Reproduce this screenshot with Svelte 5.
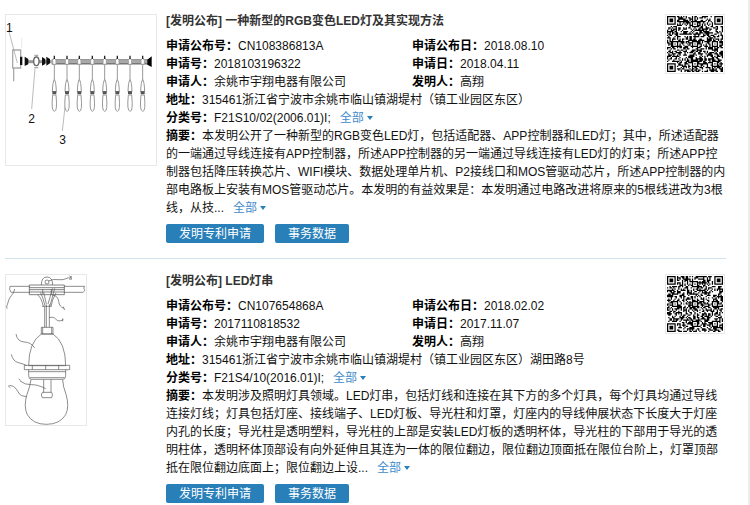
<script lang="ts">
  interface Patent {
    title: string;
    publicationNo: string;
    publicationDate: string;
    applicationNo: string;
    applicationDate: string;
    applicant: string;
    inventor: string;
    address: string;
    category: string;
    summary: string;
    drawing: "string" | "bulb";
  }

  const patents: Patent[] = [
    {
      title: "一种新型的RGB变色LED灯及其实现方法",
      publicationNo: "CN108386813A",
      publicationDate: "2018.08.10",
      applicationNo: "2018103196322",
      applicationDate: "2018.04.11",
      applicant: "余姚市宇翔电器有限公司",
      inventor: "高翔",
      address: "315461浙江省宁波市余姚市临山镇湖堤村（镇工业园区东区）",
      category: "F21S10/02(2006.01)I;",
      summary:
        "本发明公开了一种新型的RGB变色LED灯，包括适配器、APP控制器和LED灯；其中，所述适配器的一端通过导线连接有APP控制器，所述APP控制器的另一端通过导线连接有LED灯的灯束；所述APP控制器包括降压转换芯片、WIFI模块、数据处理单片机、P2接线口和MOS管驱动芯片，所述APP控制器的内部电路板上安装有MOS管驱动芯片。本发明的有益效果是：本发明通过电路改进将原来的5根线进改为3根线，从技...",
      drawing: "string",
    },
    {
      title: "LED灯串",
      publicationNo: "CN107654868A",
      publicationDate: "2018.02.02",
      applicationNo: "2017110818532",
      applicationDate: "2017.11.07",
      applicant: "余姚市宇翔电器有限公司",
      inventor: "高翔",
      address: "315461浙江省宁波市余姚市临山镇湖堤村（镇工业园区东区）湖田路8号",
      category: "F21S4/10(2016.01)I;",
      summary:
        "本发明涉及照明灯具领域。LED灯串，包括灯线和连接在其下方的多个灯具，每个灯具均通过导线连接灯线；灯具包括灯座、接线端子、LED灯板、导光柱和灯罩，灯座内的导线伸展状态下长度大于灯座内孔的长度；导光柱是透明塑料，导光柱的上部是安装LED灯板的透明杯体，导光柱的下部用于导光的透明柱体，透明杯体顶部设有向外延伸且其连为一体的限位翻边，限位翻边顶面抵在限位台阶上，灯罩顶部抵在限位翻边底面上；限位翻边上设...",
      drawing: "bulb",
    },
  ];

  const lamps = [163, 201, 238, 277, 314, 352, 390, 428];

  const QR_SIZE = 45;

  // ring pattern shared by finder and alignment marks
  function ring(dx: number, dy: number, radius: number) {
    const d = Math.max(Math.abs(dx), Math.abs(dy));
    if (d > radius) return null;
    return radius === 4 ? d === 3 || d < 2 : d !== 1;
  }

  function noise(n: number) {
    n = Math.imul(n ^ (n >>> 16), 0x45d9f3b);
    n = Math.imul(n ^ (n >>> 16), 0x45d9f3b);
    return (n ^ (n >>> 16)) & 1;
  }

  function qrPath(seed: number) {
    let path = "";
    const finders = [[3, 3], [41, 3], [3, 41]];
    const marks = [[22, 6], [6, 22], [22, 22], [38, 22], [22, 38], [38, 38]];

    for (let y = 0; y < QR_SIZE; y++) {
      for (let x = 0; x < QR_SIZE; x++) {
        let dark = noise(seed + y * QR_SIZE + x) === 1;
        if (x === 6) dark = y % 2 === 0;
        if (y === 6) dark = x % 2 === 0;
        for (const [cx, cy] of marks) dark = ring(x - cx, y - cy, 2) ?? dark;
        for (const [cx, cy] of finders) dark = ring(x - cx, y - cy, 4) ?? dark;
        if (dark) path += `M${x} ${y}h1v1h-1z`;
      }
    }
    return path;
  }
</script>

{#snippet stringLights()}
  <svg class="drawing wide" viewBox="18 30 450 450" role="img" aria-label="摘要附图">
    <g fill="none" stroke="#aaa" stroke-width="4">
      <path d="M38 135h24v54H38zM41 189v40" />
      <path d="M26 76L52 174M105 190L95 312M195 305L187 378" stroke="#999" stroke-width="2" />
      <path d="M65 98v30" stroke="#eee" />
    </g>
    <path d="M78 170H155" stroke="#999" stroke-width="9" />
    <path d="M155 165H444M155 176H444" stroke="#777" stroke-width="5" />
    <path d="M155 170H444" stroke="#aaa" stroke-width="8" />
    <path d="M60 155h7v25h-7zM74 155l11 7v16l-11 5zM126 156l10 6v15l-10 5zM139 155l11 7v13l-11 7z" fill="#111" />
    <path d="M442 164l13-10v32l-13-7z" fill="#000" />
    <ellipse cx="109" cy="169" rx="8" ry="13" fill="#fff" stroke="#666" stroke-width="4" />
    <path d="M103 151h12M103 188h12" stroke="#aaa" stroke-width="4" />
    {#each lamps as x}
      <g fill="#fff" stroke="#999" stroke-width="3">
        <path d="M{x - 5} 166q5-12 10 0v12h-10z" />
        <path d="M{x} 152v10" stroke="#222" stroke-width="4" />
        <path d="M{x} 180v48" />
        <path d="M{x} 224q-5 5-6 36h12q-1-31-6-36z" />
        <path d="M{x - 5} 270q-5 48 5 49t5-49z" />
        <path d="M{x - 6} 263h12" stroke="#555" stroke-width="9" />
      </g>
    {/each}
    <g class="mark" fill="#111">
      <text x="18" y="80">1</text>
      <text x="85" y="354">2</text>
      <text x="178" y="417">3</text>
    </g>
  </svg>
{/snippet}

{#snippet bulb()}
  <svg class="drawing" viewBox="18 30 240 450" role="img" aria-label="摘要附图">
    <g fill="none" stroke="#555" stroke-width="2">
      <path d="M89 64H30q-4 8 3 18H89M193 64H254q-5 5-1 9t-4 9H193" />
      <path d="M88 60H193V89H88zM88 68H193M88 74H193M88 81H193" stroke="#444" />
      <path d="M124 60q0-24 17-24t17 24" />
      <circle cx="141" cy="51" r="6" />
      <path d="M146 48q14-7 28-4t32-6" />
      <path d="M208 33l8 7M208 40l7-7M207 42h9" stroke="#333" />
      <path d="M44 72q-3 14-10 20t-12 27q-5 9 0 12" />
      <path d="M112 89q12 8 18 35M121 82q8 15 14 40M131 82l8 35M158 70l-14 47M164 70q-7 30-15 54M168 84q-12 20-15 40M126 124h29M128 72v16M154 72v16" />
      <path d="M134 124V187M139 118V187M148 118V187" />
      <path d="M157 90q17 2 19 19t16 21M190 125l4 10" />
      <path d="M147 158q14-4 21 5t22 1M188 160v9" />
      <path d="M124 187h35v20h-35zM128 207v-20M155 207v-20" />
      <path d="M124 207Q86 232 86 302H197Q197 232 159 207z" />
      <path d="M48 207q4 23 25 24t31 18" />
      <path d="M34 268q5 21 21 25t24 8" />
      <path d="M73 301H209V314H73zM97 301v13M137 301v13M176 301v13" />
      <path d="M86 314v17q0 12 8 12H189q8 0 8-12V314M86 320H197M90 338H193" />
      <path d="M93 344Q90 365 81 388Q70 424 82 449Q99 478 139 478Q180 478 197 449Q209 424 198 388Q189 365 188 344" />
      <path d="M131 344V382M153 344V382M127 382h28q5 7 0 16H127q-6-8 0-16z" />
      <path d="M60 348q16 12 34 11t43 12M56 342l6 4" />
      <path d="M28 361q13 0 20 10t10 16t22 8M24 362l7 6" />
    </g>
  </svg>
{/snippet}

<main>
  {#each patents as patent, i}
    <article>
      <div class="thumb">
        {#if patent.drawing === "string"}
          {@render stringLights()}
        {:else}
          {@render bulb()}
        {/if}
      </div>

      <div class="detail">
        <div class="head">
          <div class="info">
            <h2>[发明公布] {patent.title}</h2>
            <dl>
              <div><dt>申请公布号：</dt><dd>{patent.publicationNo}</dd></div>
              <div><dt>申请公布日：</dt><dd>{patent.publicationDate}</dd></div>
              <div><dt>申请号：</dt><dd>{patent.applicationNo}</dd></div>
              <div><dt>申请日：</dt><dd>{patent.applicationDate}</dd></div>
              <div><dt>申请人：</dt><dd>{patent.applicant}</dd></div>
              <div><dt>发明人：</dt><dd>{patent.inventor}</dd></div>
              <div class="full"><dt>地址：</dt><dd>{patent.address}</dd></div>
              <div class="full">
                <dt>分类号：</dt><dd>{patent.category}<a class="more" href="#category-{i}">全部</a></dd>
              </div>
            </dl>
          </div>
          <svg class="qr" viewBox="0 0 45 45" role="img" aria-label="二维码">
            <path d={qrPath(i * 7700 + 2018)} />
          </svg>
        </div>

        <p><b>摘要：</b>{patent.summary}<a class="more" href="#summary-{i}">全部</a></p>

        <div class="actions">
          <button type="button">发明专利申请</button>
          <button type="button">事务数据</button>
        </div>
      </div>
    </article>
  {/each}
</main>

<style>
  :global(body) {
    margin: 0;
    background: #fff;
    overflow: hidden;
  }

  main {
    box-sizing: border-box;
    min-height: 100vh;
    display: flex;
    flex-direction: column;
    gap: 1px;
    padding: 0 22px 0 5px;
    border-right: 2px solid #e9efee;
    color: #111;
    font: 12px/18px "Liberation Sans", Arial, "Noto Sans CJK SC", sans-serif;
  }

  article {
    display: flex;
    padding: 12px 0 15px;
    border-bottom: 1px solid #d3e3ee;
  }

  .thumb {
    flex: 0 0 161px;
    padding-top: 2px;
  }

  .drawing {
    display: block;
    width: 80px;
    height: 150px;
    border: 1px solid #e8e8e8;
  }

  .drawing.wide {
    width: 150px;
  }

  .mark {
    font-family: "Liberation Sans", sans-serif;
    font-size: 36px;
  }

  .detail {
    flex: 1;
    min-width: 0;
  }

  .head {
    display: flex;
    justify-content: space-between;
  }

  .info {
    flex: 1;
  }

  h2 {
    margin: 0 0 7px;
    color: #333;
    font-size: 12px;
    font-weight: 700;
  }

  dl {
    display: grid;
    grid-template-columns: 246px 1fr;
    margin: 0;
  }

  dl > div {
    display: flex;
    height: 18px;
  }

  .full {
    grid-column: 1 / -1;
  }

  dt,
  b {
    color: #000;
    font-weight: 700;
  }

  dd,
  p {
    margin: 0;
  }

  .qr {
    flex: none;
    width: 56px;
    height: 56px;
    margin: 2px 1px 0 0;
    padding: 1px;
    border: 1px solid #e8e8e8;
  }

  .more {
    margin-left: 9px;
    color: #428bca;
    text-decoration: none;
  }

  .more::after {
    content: "";
    display: inline-block;
    margin-left: 3px;
    border: 3px solid transparent;
    border-top: 4px solid #2980b9;
    border-bottom: 0;
    vertical-align: 2px;
  }

  .actions {
    display: flex;
    gap: 11px;
    margin-top: 7px;
  }

  button {
    height: 19px;
    padding: 0 13px;
    border: 0;
    border-radius: 2px;
    background: #2980b9;
    color: #fff;
    font: inherit;
  }
</style>
